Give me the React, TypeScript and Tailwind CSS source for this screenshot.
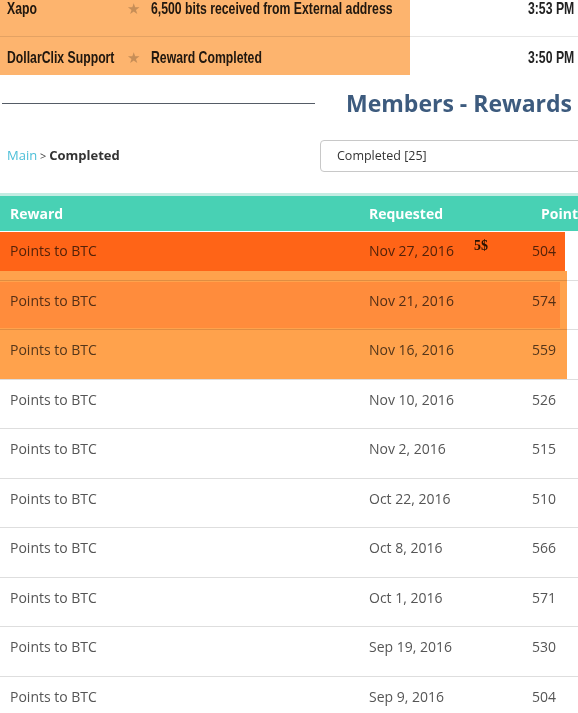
import React from "react";

const ROWS: Array<{ date: string; points: number }> = [
  { date: "Nov 27, 2016", points: 504 },
  { date: "Nov 21, 2016", points: 574 },
  { date: "Nov 16, 2016", points: 559 },
  { date: "Nov 10, 2016", points: 526 },
  { date: "Nov 2, 2016", points: 515 },
  { date: "Oct 22, 2016", points: 510 },
  { date: "Oct 8, 2016", points: 566 },
  { date: "Oct 1, 2016", points: 571 },
  { date: "Sep 19, 2016", points: 530 },
  { date: "Sep 9, 2016", points: 504 },
];

const MAILS = [
  { from: "Xapo", subject: "6,500 bits received from External address", time: "3:53 PM", pad: "pt-0" },
  { from: "DollarClix Support", subject: "Reward Completed", time: "3:50 PM", pad: "pt-[12px]" },
];

export default function App() {
  return (
    <div className="relative w-[578px] h-[713px] overflow-hidden bg-white font-['Open_Sans',sans-serif]">
      {/* inbox strip (narrow bold look) */}
      <div className="w-[578px] font-['Liberation_Sans',sans-serif] font-bold text-[17px] text-[#222]">
        {MAILS.map((m, i) => (
          <div
            key={m.from}
            className={`flex items-start h-[37px] leading-[18px] whitespace-nowrap ${m.pad} ${i === 0 ? "border-b border-[#e6e6e6]" : ""}`}
          >
            <span className="w-[127px] pl-[7px] shrink-0">
              <span className="inline-block origin-left scale-x-[0.72]">{m.from}</span>
            </span>
            <span className="w-[24px] shrink-0 text-[#c9c9c9] text-[15px] font-normal">★</span>
            <span className="flex-1">
              <span className="inline-block origin-left scale-x-[0.72]">{m.subject}</span>
            </span>
            <span className="pr-[4px]">
              <span className="inline-block origin-right scale-x-[0.72]">{m.time}</span>
            </span>
          </div>
        ))}
      </div>

      {/* heading */}
      <div className="mt-[14px] flex items-center h-[30px]">
        <div className="ml-[2px] w-[313px] h-px bg-[#555c66] shrink-0" />
        <h1 className="ml-[31px] whitespace-nowrap text-[23px] leading-[28px] font-bold text-[#3d5b7e]">
          Members - Rewards
        </h1>
      </div>

      {/* breadcrumb + filter */}
      <div className="mt-[22px] flex items-center h-[32px] w-[700px]">
        <div className="w-[320px] shrink-0 pl-[7px] text-[13px] text-[#444] -mt-[1px]">
          <span className="text-[#4cbfd8]">Main</span>
          <span className="text-[11px]"> &gt; </span>
          <span className="font-bold text-[#333]">Completed</span>
        </div>
        <div className="w-[380px] h-[32px] border border-[#c8c8c8] rounded-[4px] flex items-center pl-[16px] text-[12.5px] text-[#333]">
          Completed [25]
        </div>
      </div>

      {/* table */}
      <div className="mt-[21px] w-[640px]">
        <div className="h-[38px] border-t-[3px] border-[#c3ece2] bg-[#48d1b4] flex items-center text-white font-bold text-[14px] pl-[2px]">
          <span className="w-[357px] pl-[8px]">Reward</span>
          <span className="w-[163px] pl-[10px]">Requested</span>
          <span className="pl-[19px]">Points</span>
        </div>
        {ROWS.map((r) => (
          <div
            key={r.date}
            className="h-[49.5px] border-b border-[#dedede] flex items-start pt-[10px] leading-[20px] text-[14px] text-[#555] pl-[2px]"
          >
            <span className="w-[357px] pl-[8px]">Points to BTC</span>
            <span className="w-[163px] pl-[10px]">{r.date}</span>
            <span className="pl-[10px]">{r.points}</span>
          </div>
        ))}
      </div>

      {/* highlight overlays */}
      <div className="absolute left-0 top-0 w-[410px] h-[75px] bg-[#fdb46e] mix-blend-multiply" />
      <div className="absolute left-0 top-[232px] w-[565px] h-[39px] bg-[#ff6417] mix-blend-multiply" />
      <div className="absolute left-0 top-[271px] w-[567px] h-[108px] bg-[#ffa24c] mix-blend-multiply" />
      <div className="absolute left-0 top-[282px] w-[560px] h-[46px] bg-[#ffdcc9] mix-blend-multiply" />
      <span className="absolute left-[474px] top-[236px] font-['Liberation_Serif',serif] font-bold text-[14px] leading-[20px] text-[#2a1200]">
        5$
      </span>
    </div>
  );
}
